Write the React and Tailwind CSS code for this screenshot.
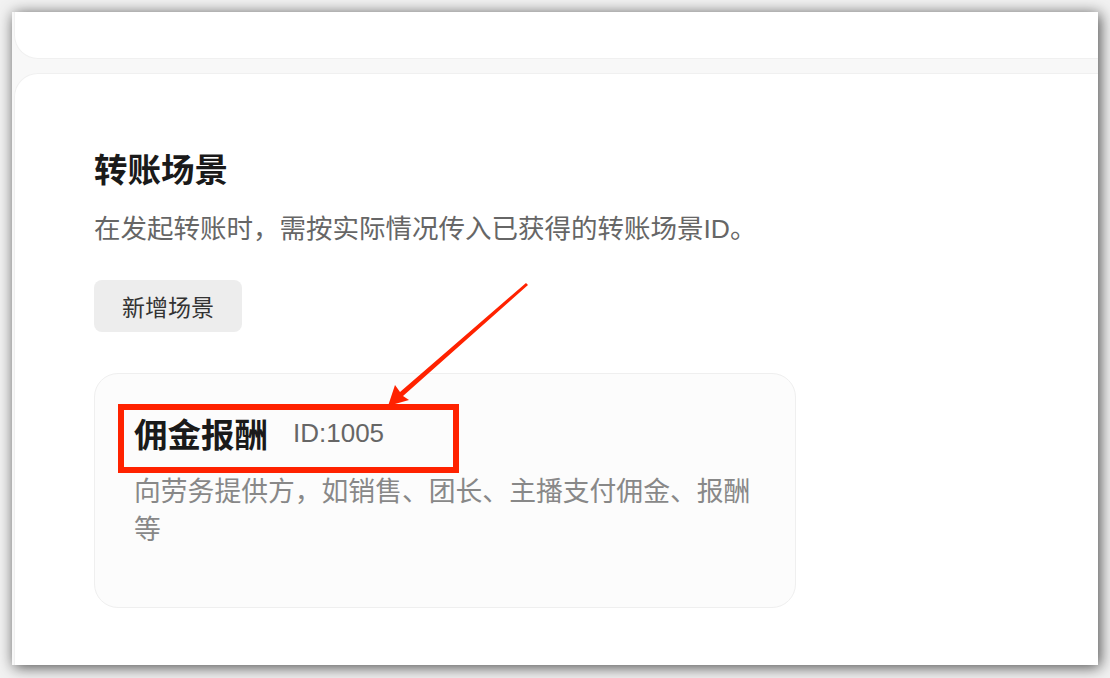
import React from "react";

const cjk = { fontFamily: '"Noto Sans CJK SC", "Noto Sans", sans-serif' };
const latin = { fontFamily: '"Liberation Sans", "Noto Sans CJK SC", sans-serif' };

// red markup drawn over the screenshot
const Annotation = () => (
  <svg className="absolute left-0 top-0 pointer-events-none" width="1110" height="678" viewBox="0 0 1110 678">
    <rect x="121" y="407" width="335" height="63" fill="none" stroke="#ff2200" strokeWidth="6" />
    <path d="M526 283 L528 285 L403 396 L409 400 L388 406 L395 385 L400 392 Z" fill="#ff2200" />
  </svg>
);

const SceneCard = ({ name, id, desc }) => (
  <div className="w-[702px] rounded-[24px] border border-[#efefef] bg-[#fcfcfc] pl-[39px] pr-[40px] pt-[39px] pb-[60px]">
    <div className="flex items-center">
      <span className="text-[33.5px] leading-[40px] font-bold text-[#1a1a1a]" style={cjk}>{name}</span>
      <span className="ml-[25px] text-[26px] leading-[40px] text-[#666666]" style={latin}>ID:{id}</span>
    </div>
    <p className="mt-[18px] text-[26.8px] leading-[38px] text-[#888888]" style={cjk}>{desc}</p>
  </div>
);

export default function App() {
  return (
    <div className="relative w-[1110px] h-[678px] bg-[#f2f2f2] overflow-hidden">
      <div className="ml-[12px] mt-[12px] w-[1086px] h-[653px] overflow-hidden bg-[#f8f8f8] pl-[2px] shadow-[2px_2px_14px_rgba(0,0,0,0.7)]">
        <div className="flex flex-col gap-[14px]">
          {/* top card, cut off */}
          <div className="h-[47px] bg-white rounded-bl-[24px] border-b border-l border-[#f0f0f0]" />

          {/* main card */}
          <div className="h-[700px] bg-white rounded-tl-[24px] border-t border-l border-[#f0f0f0] pl-[79px] pt-[74px]">
            <h1 className="text-[33.5px] leading-[40px] font-bold text-[#1a1a1a]" style={cjk}>转账场景</h1>
            <p className="mt-[21px] text-[26.5px] leading-[36px] text-[#666666]" style={cjk}>
              在发起转账时，需按实际情况传入已获得的转账场景<span style={latin}>ID</span>。
            </p>
            <button className="mt-[33px] h-[52px] w-[148px] rounded-[8px] bg-[#ededed] text-[23px] text-[#333333]" style={cjk}>
              新增场景
            </button>
            <div className="mt-[41px]">
              <SceneCard name="佣金报酬" id="1005" desc="向劳务提供方，如销售、团长、主播支付佣金、报酬等" />
            </div>
          </div>
        </div>
      </div>
      <Annotation />
    </div>
  );
}
